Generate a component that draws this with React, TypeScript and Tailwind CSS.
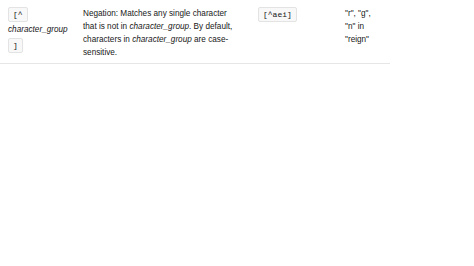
export default function App() {
  const code =
    'inline-block rounded-[2px] border border-[#e3e3e3] bg-[#f8f8f8] px-[4px] font-["Liberation_Mono",monospace] text-[8px] leading-[13px] text-[#171717]'

  return (
    <div className="h-[266px] w-[474px] bg-white font-['Liberation_Sans',Arial,sans-serif] text-[8.2px] leading-[13px] text-[#171717]">
      <div className="flex w-[390px] border-b border-[#e6e6e6] pb-[4px] pt-[7px]">
        {/* pattern */}
        <div className="flex w-[75px] shrink-0 flex-col items-start pl-[8px]">
          <span className={code}>[^</span>
          <i className="mt-[1px] leading-[14px]">character_group</i>
          <span className={`${code} mt-[1px]`}>]</span>
        </div>

        {/* description */}
        <div className="w-[175px] shrink-0 pl-[8px]">
          Negation: Matches any single character
          <br />
          that is not in <i>character_group</i>. By default,
          <br />
          characters in <i>character_group</i> are case-
          <br />
          sensitive.
        </div>

        {/* example */}
        <div className="w-[95px] shrink-0 pl-[8px]">
          <span className={code}>[^aei]</span>
        </div>

        {/* matches */}
        <div className="w-[45px] shrink-0 whitespace-nowrap">
          "r", "g",
          <br />
          "n" in
          <br />
          "reign"
        </div>
      </div>
    </div>
  )
}
